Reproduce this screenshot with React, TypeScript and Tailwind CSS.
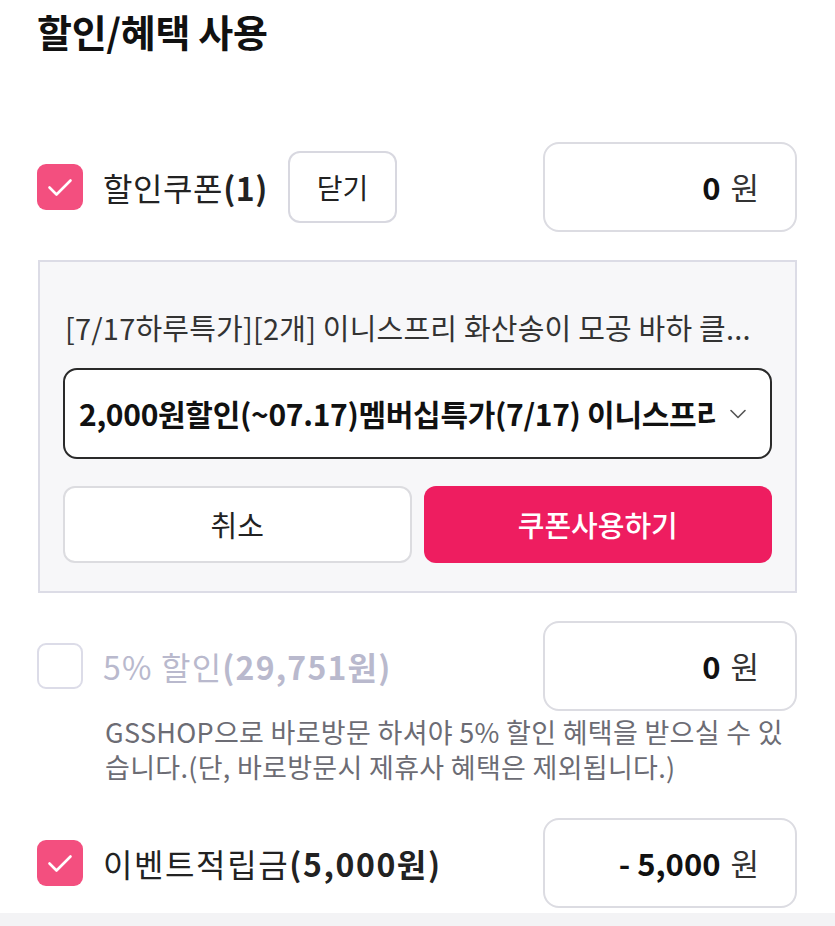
import React from 'react';
import { ChevronDown } from 'lucide-react';

const CheckBox: React.FC<{ checked: boolean }> = ({ checked }) =>
  checked ? (
    <span className="flex h-[46px] w-[46px] shrink-0 items-center justify-center rounded-[9px] bg-[#f34f7f]">
      <svg width="30" height="30" viewBox="0 0 30 30" fill="none">
        <path d="M4.5 15.5l7 7L25.5 8.5" stroke="#fff" strokeWidth="2.6" strokeLinecap="round" strokeLinejoin="round" />
      </svg>
    </span>
  ) : (
    <span className="h-[46px] w-[46px] shrink-0 rounded-[9px] border-2 border-[#dcdce8] bg-white" />
  );

const AmountBox: React.FC<{ value: string }> = ({ value }) => (
  <div className="ml-auto flex h-[90px] w-[254px] items-center justify-end rounded-[16px] border-2 border-[#dcdce2] bg-white pr-[36px] text-[31px] text-[#111]">
    <span className="font-bold">{value}</span>
    <span className="ml-[10px] text-[#333]">원</span>
  </div>
);

export default function App() {
  return (
    <div
      className="relative h-[926px] w-[835px] overflow-hidden bg-white"
      style={{ fontFamily: '"Noto Sans CJK KR", "Noto Sans", sans-serif' }}
    >
      <h1 className="px-[37px] pt-[8px] text-[38px] font-bold leading-[45px] tracking-[-0.3px] text-[#111]">
        할인/혜택 사용
      </h1>

      {/* 할인쿠폰 */}
      <div className="mt-[89px] flex items-center pl-[37px] pr-[38px]">
        <CheckBox checked />
        <span className="ml-[20px] text-[32px] leading-none tracking-[0.6px] text-[#222]">
          할인쿠폰<span className="font-bold">(1)</span>
        </span>
        <button className="ml-[20px] mt-[9px] flex h-[72px] w-[109px] items-center justify-center self-start rounded-[12px] border-2 border-[#d8d8e0] bg-white text-[28px] text-[#222]">
          닫기
        </button>
        <AmountBox value="0" />
      </div>

      <div className="mx-[38px] mt-[28px] border-2 border-[#dcdce6] bg-[#f7f7f9] px-[23px] pt-[46px] pb-[28px]">
        <p className="whitespace-nowrap pl-[2px] text-[29px] leading-[38px] tracking-[0.2px] text-[#333]">
          [7/17하루특가][2개] 이니스프리 화산송이 모공 바하 클...
        </p>
        <div className="mt-[22px] flex h-[91px] items-center rounded-[14px] border-2 border-[#2a2a2a] bg-white pl-[14px] pr-[18px]">
          <span className="flex-1 overflow-hidden whitespace-nowrap text-[30px] font-bold tracking-[-0.3px] text-[#111]">
            2,000원할인(~07.17)멤버십특가(7/17) 이니스프리
          </span>
          <ChevronDown className="ml-[8px] shrink-0 text-[#555]" size={28} strokeWidth={1.4} />
        </div>
        <div className="mt-[27px] grid grid-cols-2 gap-[12px]">
          <button className="flex h-[77px] items-center justify-center rounded-[12px] border-2 border-[#dcdce0] bg-white text-[29px] text-[#222]">
            취소
          </button>
          <button className="flex h-[77px] items-center justify-center rounded-[12px] bg-[#ee1d60] text-[29px] font-medium text-white">
            쿠폰사용하기
          </button>
        </div>
      </div>

      {/* 5% 할인 */}
      <div className="mt-[28px] flex items-center pl-[37px] pr-[38px]">
        <CheckBox checked={false} />
        <span className="ml-[20px] text-[32px] leading-none tracking-[1.2px] text-[#b9b9cd]">
          5% 할인<span className="font-bold">(29,751원)</span>
        </span>
        <AmountBox value="0" />
      </div>
      <p className="mt-[3px] whitespace-nowrap pl-[105px] text-[27px] leading-[35px] tracking-[0.3px] text-[#6c6c74]">
        GSSHOP으로 바로방문 하셔야 5% 할인 혜택을 받으실 수 있
        <br />
        습니다.(단, 바로방문시 제휴사 혜택은 제외됩니다.)
      </p>

      {/* 이벤트적립금 */}
      <div className="mt-[34px] flex items-center pl-[37px] pr-[38px]">
        <CheckBox checked />
        <span className="ml-[20px] text-[32px] leading-none tracking-[1.6px] text-[#222]">
          이벤트적립금<span className="font-semibold">(5,000원)</span>
        </span>
        <AmountBox value="- 5,000" />
      </div>

      <div className="absolute bottom-0 left-0 h-[13px] w-full bg-[#f3f3f5]" />
    </div>
  );
}
